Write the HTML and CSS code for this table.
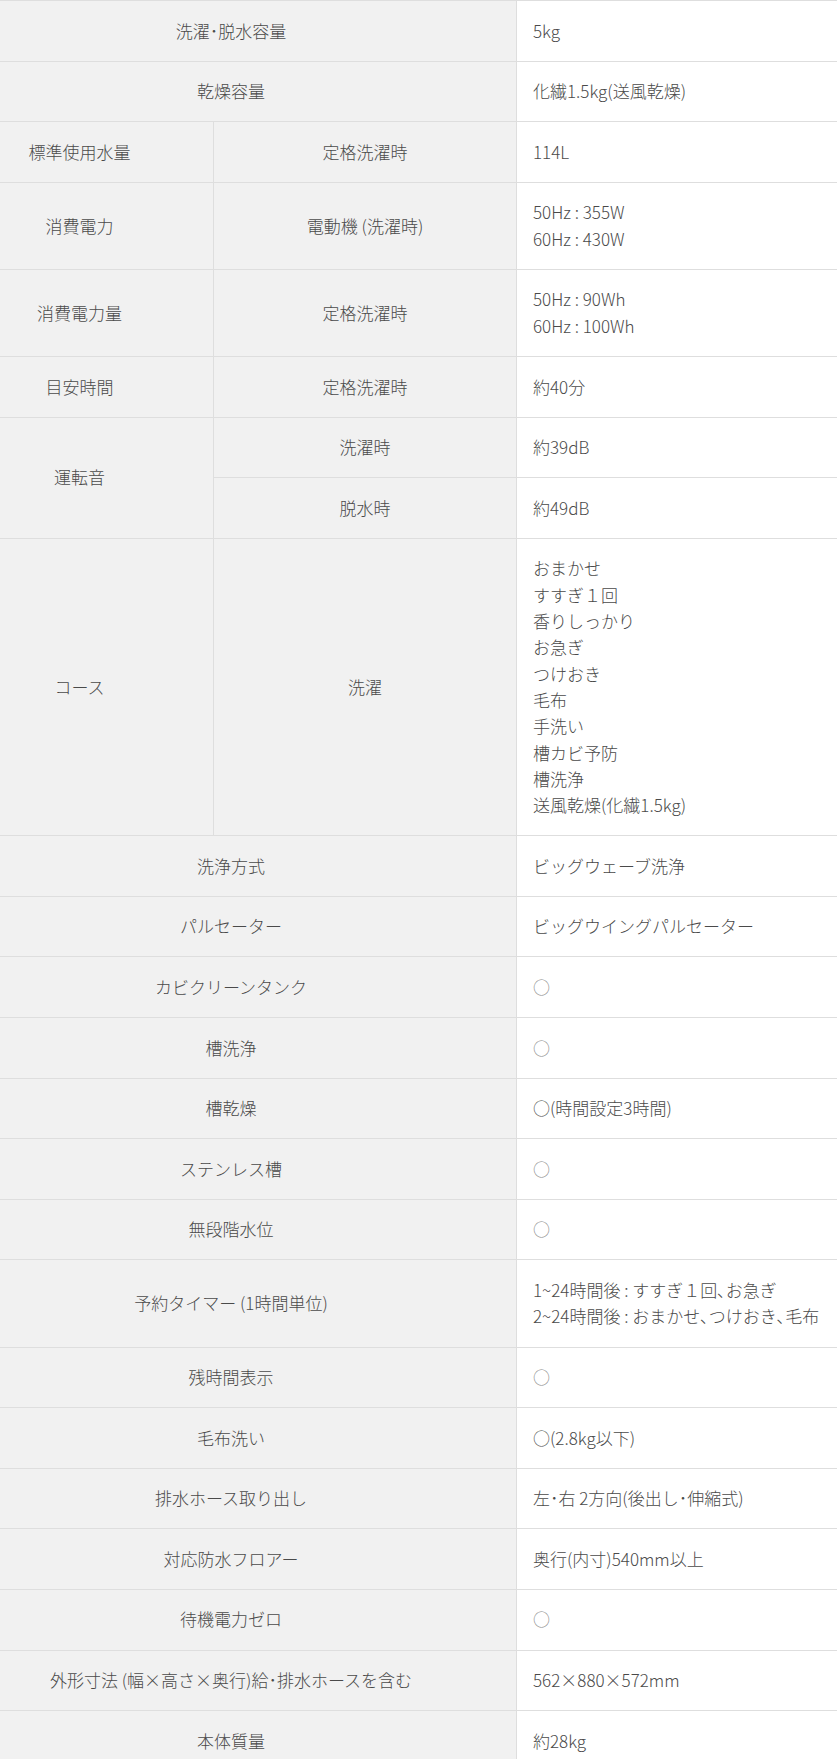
FILE: index.html
```html
<!DOCTYPE html>
<html lang="ja">

<head>
    <meta charset="UTF-8" />
    <meta name="viewport" content="width=device-width, initial-scale=1.0" />
    <title>仕様</title>
    <link rel="stylesheet" href="styles.css">
</head>

<body>

    <!-- 仕様表 -->
    <section class="spec">
        <table class="spec-table">
            <colgroup>
                <col class="col-name">
                <col class="col-sub">
                <col class="col-value">
            </colgroup>
            <tbody>
                <tr>
                    <th colspan="2">洗濯･脱水容量</th>
                    <td>5kg</td>
                </tr>
                <tr>
                    <th colspan="2">乾燥容量</th>
                    <td>化繊1.5kg(送風乾燥)</td>
                </tr>
                <tr>
                    <th>標準使用水量</th>
                    <th>定格洗濯時</th>
                    <td>114L</td>
                </tr>
                <tr>
                    <th>消費電力</th>
                    <th>電動機 (洗濯時)</th>
                    <td>50Hz : 355W<br>60Hz : 430W</td>
                </tr>
                <tr>
                    <th>消費電力量</th>
                    <th>定格洗濯時</th>
                    <td>50Hz : 90Wh<br>60Hz : 100Wh</td>
                </tr>
                <tr>
                    <th>目安時間</th>
                    <th>定格洗濯時</th>
                    <td>約40分</td>
                </tr>
                <tr>
                    <th rowspan="2">運転音</th>
                    <th>洗濯時</th>
                    <td>約39dB</td>
                </tr>
                <tr>
                    <th>脱水時</th>
                    <td>約49dB</td>
                </tr>
                <tr>
                    <th>コース</th>
                    <th>洗濯</th>
                    <td class="course">
                        おまかせ<br>すすぎ１回<br>香りしっかり<br>お急ぎ<br>つけおき<br>毛布<br>手洗い<br>槽カビ予防<br>槽洗浄<br>送風乾燥(化繊1.5kg)
                    </td>
                </tr>
                <tr>
                    <th colspan="2">洗浄方式</th>
                    <td>ビッグウェーブ洗浄</td>
                </tr>
                <tr>
                    <th colspan="2">パルセーター</th>
                    <td>ビッグウイングパルセーター</td>
                </tr>
                <tr>
                    <th colspan="2">カビクリーンタンク</th>
                    <td class="mark">○</td>
                </tr>
                <tr>
                    <th colspan="2">槽洗浄</th>
                    <td class="mark">○</td>
                </tr>
                <tr>
                    <th colspan="2">槽乾燥</th>
                    <td>○(時間設定3時間)</td>
                </tr>
                <tr>
                    <th colspan="2">ステンレス槽</th>
                    <td class="mark">○</td>
                </tr>
                <tr>
                    <th colspan="2">無段階水位</th>
                    <td class="mark">○</td>
                </tr>
                <tr>
                    <th colspan="2">予約タイマー (1時間単位)</th>
                    <td>1~24時間後 : すすぎ１回､お急ぎ<br>2~24時間後 : おまかせ､つけおき､毛布</td>
                </tr>
                <tr>
                    <th colspan="2">残時間表示</th>
                    <td class="mark">○</td>
                </tr>
                <tr>
                    <th colspan="2">毛布洗い</th>
                    <td>○(2.8kg以下)</td>
                </tr>
                <tr>
                    <th colspan="2">排水ホース取り出し</th>
                    <td>左･右 2方向(後出し･伸縮式)</td>
                </tr>
                <tr>
                    <th colspan="2">対応防水フロアー</th>
                    <td>奥行(内寸)540mm以上</td>
                </tr>
                <tr>
                    <th colspan="2">待機電力ゼロ</th>
                    <td class="mark">○</td>
                </tr>
                <tr>
                    <th colspan="2">外形寸法 (幅×高さ×奥行)給･排水ホースを含む</th>
                    <td>562×880×572mm</td>
                </tr>
                <tr>
                    <th colspan="2">本体質量</th>
                    <td>約28kg</td>
                </tr>
            </tbody>
        </table>
    </section>

</body>

</html>
```

FILE: styles.css
```css
* {
    box-sizing: border-box;
    margin: 0;
    padding: 0;
}

body {
    background-color: #fff;
    color: #4a4a4a;
    font-family: "Noto Sans CJK JP", "Noto Sans", sans-serif;
    font-size: 17px;
    font-weight: 300;
    line-height: 26.5px;
    overflow-x: hidden;
}

/* 仕様表 */

.spec {
    overflow: hidden;
}

.spec-table {
    width: 947px;
    margin-left: -55px;
    border-collapse: collapse;
    table-layout: fixed;
}

.col-name {
    width: 268px;
}

.col-sub {
    width: 303px;
}

.col-value {
    width: 376px;
}

.spec-table th,
.spec-table td {
    border: 1px solid #dedede;
    padding: 16.55px 16px;
    vertical-align: middle;
}

.spec-table th {
    background-color: #f1f1f1;
    font-weight: 300;
    text-align: center;
}

.spec-table td {
    background-color: #fff;
    text-align: left;
}

.spec-table td.course {
    line-height: 26.35px;
}

.spec-table td.mark {
    color: #888;
}
```
